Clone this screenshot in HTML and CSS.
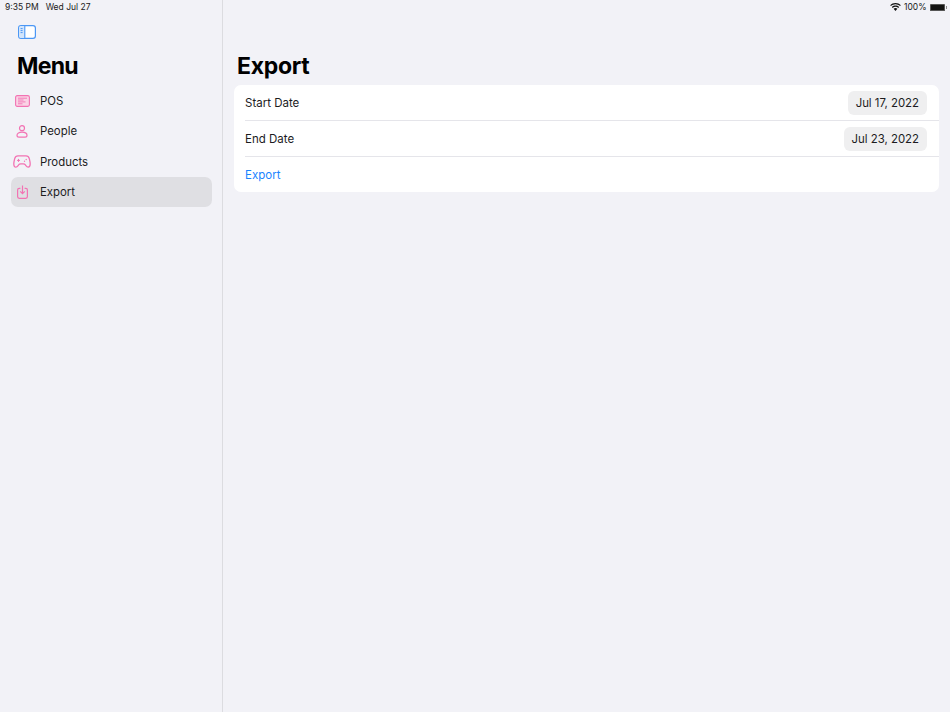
FILE: index.html
```html
<!DOCTYPE html>
<html lang="en">
<head>
<meta charset="utf-8">
<title>Export</title>
<link rel="stylesheet" href="styles.css">
</head>
<body>
<div class="app">
  <aside class="sidebar">
    <div class="status-left"><span>9:35 PM</span><span>Wed Jul 27</span></div>
    <div class="toolbar">
      <svg class="toggle" width="18" height="14" viewBox="0 0 18 14" fill="none">
        <rect x="0.6" y="0.6" width="16.8" height="12.8" rx="2.4" fill="#fff" stroke="#4b97f5" stroke-width="1.2"/>
        <path d="M1 3a2 2 0 0 1 2-2h4v12H3a2 2 0 0 1-2-2z" fill="#d3e5fb"/>
        <path d="M6.800 1v12" stroke="#4b97f5" stroke-width="1.100"/>
        <path d="M2.600 3.600h2M2.600 5.600h2M2.600 7.600h2" stroke="#4b97f5" stroke-width="1"/>
      </svg>
    </div>
    <h1 class="menu-title">Menu</h1>
    <nav class="menu">
      <a class="menu-item">
        <span class="menu-icon">
          <svg width="15" height="12" viewBox="0 0 15 12" fill="none">
            <rect x="0.600" y="0.600" width="13.800" height="10.800" rx="1.600" fill="#fad3e5" stroke="#f273b3" stroke-width="1.100"/>
            <path d="M3 3.200h9M3 5h5.500M3 6.900h7.500M3 8.800h4.500" stroke="#f273b3" stroke-width="0.900"/>
          </svg>
        </span>
        <span>POS</span>
      </a>
      <a class="menu-item">
        <span class="menu-icon">
          <svg width="12" height="13" viewBox="0 0 12 13" fill="none" stroke="#f273b3" stroke-width="1.200">
            <circle cx="6" cy="3.200" r="2.500"/>
            <path d="M1 10.300c0-2.100 2.200-3.100 5-3.100s5 1 5 3.100c0 1.200-.7 1.900-1.900 1.900H2.900C1.700 12.200 1 11.500 1 10.300z"/>
          </svg>
        </span>
        <span>People</span>
      </a>
      <a class="menu-item">
        <span class="menu-icon">
          <svg class="pad-icon" width="18" height="13" viewBox="0 0 18 13" fill="none" stroke="#f273b3" stroke-width="1.300">
            <path d="M5 .8h8c1.800 0 2.800 1 3.300 2.800.5 1.900.9 3.900.9 5.500 0 1.800-.8 3-2 3-1.400 0-2.100-1.300-3-2.400-.5-.7-1-.9-1.800-.9H7.600c-.8 0-1.300.2-1.800.9-.9 1.100-1.600 2.400-3 2.400-1.200 0-2-1.200-2-3 0-1.600.4-3.600.9-5.500C2.200 1.800 3.200.8 5 .8z"/>
            <path d="M4 5.400h3M5.500 3.900v3" stroke-width="1"/>
            <circle cx="11.500" cy="6.200" r="0.700" fill="#f273b3" stroke="none"/>
            <circle cx="13.200" cy="4.500" r="0.700" fill="#f273b3" stroke="none"/>
          </svg>
        </span>
        <span>Products</span>
      </a>
      <a class="menu-item active">
        <span class="menu-icon">
          <svg width="11" height="14" viewBox="0 0 11 14" fill="none" stroke="#f273b3" stroke-width="1.200">
            <path d="M3.400 3.300H2.200C1.200 3.300.6 3.900.6 4.900v6.700c0 1 .6 1.700 1.600 1.700h6.600c1 0 1.600-.7 1.600-1.700V4.900c0-1-.6-1.600-1.600-1.600H7.600"/>
            <path d="M5.500.5v7.900M3.200 6.300l2.300 2.300 2.300-2.300"/>
          </svg>
        </span>
        <span>Export</span>
      </a>
    </nav>
  </aside>
  <main class="content">
    <div class="status-right">
      <svg width="11" height="8" viewBox="0 0 11 8" fill="#111">
        <path d="M5.500 0C3.400 0 1.600.8.200 2.200l.8.9C2.200 1.900 3.800 1.200 5.500 1.200s3.300.7 4.500 1.900l.8-.9C9.400.8 7.600 0 5.500 0z"/>
        <path d="M5.500 2.600c-1.400 0-2.600.5-3.600 1.400l.8.9c.8-.7 1.700-1.100 2.800-1.100s2 .4 2.800 1.100l.8-.9c-1-.9-2.200-1.400-3.600-1.400z"/>
        <path d="M5.500 5.100c-.8 0-1.400.3-1.900.7l1.900 2.100 1.900-2.100c-.5-.4-1.100-.7-1.900-.7z"/>
      </svg>
      <span>100%</span>
      <span class="battery"><span class="battery-body"></span><span class="battery-tip"></span></span>
    </div>
    <h2 class="page-title">Export</h2>
    <section class="card">
      <div class="row">
        <span>Start Date</span>
        <span class="date-pill">Jul 17, 2022</span>
      </div>
      <div class="row">
        <span>End Date</span>
        <span class="date-pill">Jul 23, 2022</span>
      </div>
      <div class="row last"><a class="export-link">Export</a></div>
    </section>
  </main>
</div>
</body>
</html>
```
FILE: styles.css
```css
* { box-sizing: border-box; }
html, body { margin: 0; height: 100%; }
body {
  background: #f2f2f7;
  color: #111;
  font-family: Inter, "Liberation Sans", sans-serif;
  overflow: hidden;
}
.app { display: flex; width: 950px; height: 712px; }
.sidebar {
  width: 223px;
  flex: none;
  border-right: 1px solid #dcdce0;
  background: #f2f2f7;
}
.status-left {
  display: flex;
  gap: 7px;
  height: 13px;
  padding: 1px 0 0 5px;
  font-size: 8.500px;
  line-height: 12px;
  color: #1a1a1a;
}
.toolbar { display: flex; padding: 12px 0 0 18px; height: 33px; }
.menu-title {
  margin: 0;
  padding: 5px 0 0 17px;
  height: 38px;
  font-size: 23px;
  line-height: 30px;
  font-weight: 700;
  letter-spacing: -0.700px;
  color: #000;
}
.menu { display: flex; flex-direction: column; padding: 0 10px 0 11px; margin-top: 1px; }
.menu-item {
  display: flex;
  align-items: center;
  height: 30.500px;
  padding: 1px 0 0 3px;
  border-radius: 7px;
  font-size: 11.400px;
  color: #1c1c1e;
}
.menu-item.active { background: #dfdfe3; }
.menu-icon {
  display: flex;
  justify-content: center;
  align-items: center;
  width: 16px;
  margin-right: 10px;
}
.pad-icon { flex: none; }
.content { flex: 1; min-width: 0; padding: 0 11.500px 0 11px; }
.status-right {
  display: flex;
  justify-content: flex-end;
  align-items: center;
  gap: 3px;
  height: 14px;
  margin-right: -8px;
  font-size: 8.500px;
  color: #1a1a1a;
}
.battery { display: flex; align-items: center; }
.battery-body {
  width: 15px;
  height: 7px;
  background: #111;
  border-radius: 1.500px;
  box-shadow: 0 0 0 1px #555 inset;
}
.battery-tip { width: 1px; height: 3px; background: #888; margin-left: 1px; }
.page-title {
  margin: 0;
  padding: 38px 0 0 3px;
  height: 71px;
  font-size: 23px;
  line-height: 28px;
  font-weight: 700;
  letter-spacing: -0.300px;
  color: #000;
}
.card {
  background: #fff;
  border-radius: 7px;
  padding-left: 11px;
}
.row {
  display: flex;
  justify-content: space-between;
  align-items: center;
  height: 36px;
  padding-right: 11.500px;
  border-bottom: 1px solid #e5e5ea;
  font-size: 11.500px;
  color: #1c1c1e;
}
.row.last { height: 35px; border-bottom: 0; }
.date-pill {
  display: flex;
  align-items: center;
  height: 24px;
  padding: 0 8px;
  border-radius: 6px;
  background: #efeff0;
  font-size: 11.400px;
}
.export-link { color: #1a84ff; }
```
